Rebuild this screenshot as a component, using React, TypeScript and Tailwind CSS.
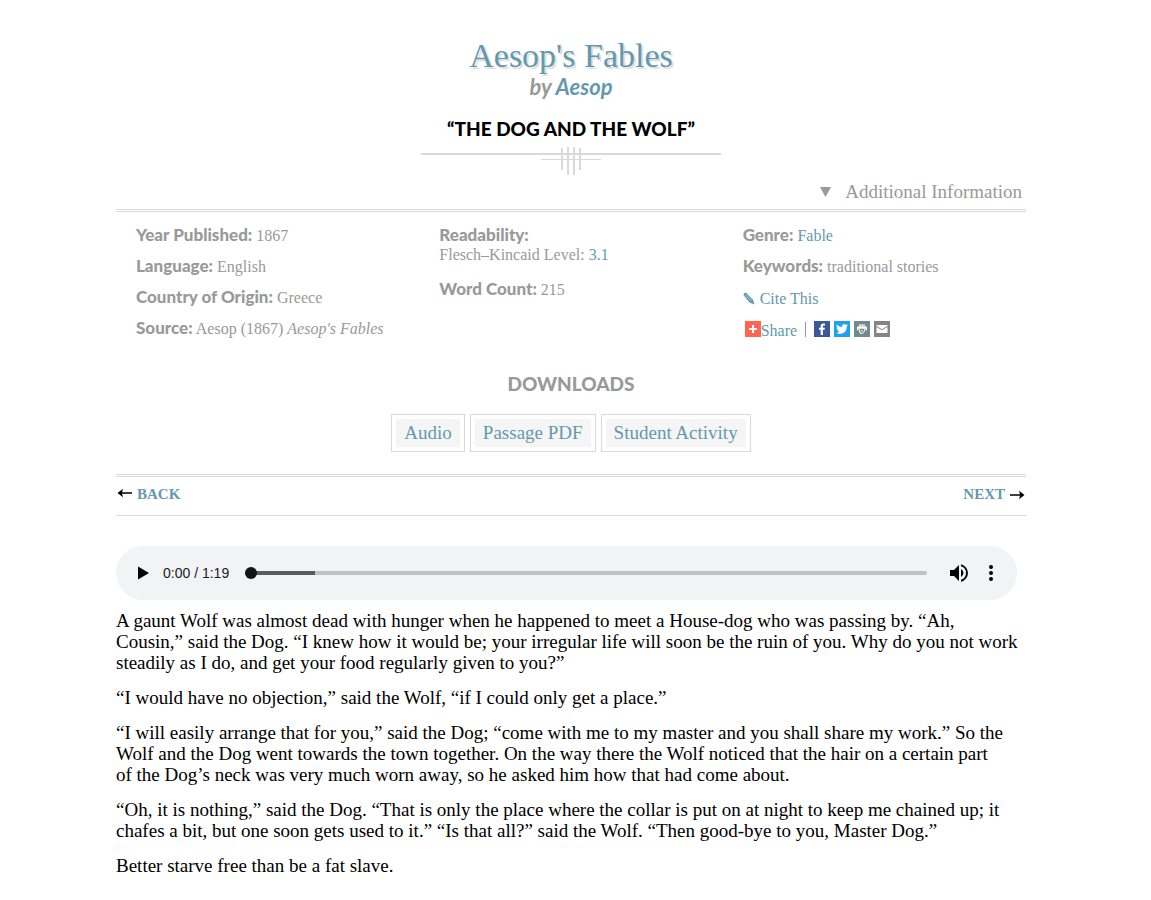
import React from "react";

const STORY: string[][] = [
  [
    "A gaunt Wolf was almost dead with hunger when he happened to meet a House-dog who was passing by. “Ah,",
    "Cousin,” said the Dog. “I knew how it would be; your irregular life will soon be the ruin of you. Why do you not work",
    "steadily as I do, and get your food regularly given to you?”",
  ],
  ["“I would have no objection,” said the Wolf, “if I could only get a place.”"],
  [
    "“I will easily arrange that for you,” said the Dog; “come with me to my master and you shall share my work.” So the",
    "Wolf and the Dog went towards the town together. On the way there the Wolf noticed that the hair on a certain part",
    "of the Dog’s neck was very much worn away, so he asked him how that had come about.",
  ],
  [
    "“Oh, it is nothing,” said the Dog. “That is only the place where the collar is put on at night to keep me chained up; it",
    "chafes a bit, but one soon gets used to it.” “Is that all?” said the Wolf. “Then good-bye to you, Master Dog.”",
  ],
  ["Better starve free than be a fat slave."],
];

function Label({ children }: { children: React.ReactNode }) {
  return <strong className="font-['Lato',sans-serif] text-[17px]/[18px] font-black">{children}</strong>;
}

function Ornament() {
  return (
    <svg className="mx-auto mt-[6px] block" width="300" height="28" viewBox="0 0 300 28" fill="#d9d9d9" aria-hidden="true" shapeRendering="crispEdges">
      <rect x="0" y="6" width="300" height="2" />
      <rect x="120" y="12" width="60" height="1" />
      <rect x="140" y="1" width="2" height="22" />
      <rect x="146" y="0" width="2" height="28" />
      <rect x="152" y="0" width="2" height="28" />
      <rect x="158" y="1" width="2" height="22" />
    </svg>
  );
}

function Arrow({ flip = false }: { flip?: boolean }) {
  return (
    <svg className={flip ? "rotate-180" : ""} width="16" height="12" viewBox="0 0 16 12" aria-hidden="true">
      <path d="M0.5 5 6 .8 5 4.200H15v1.600H5l1 3.400z" fill="#000" />
    </svg>
  );
}

function Downloads() {
  return (
    <section className="mt-[33px] text-center">
      <h3 className="font-['Lato',sans-serif] text-[19px]/6 font-black">DOWNLOADS</h3>
      <div className="mt-[18px] flex justify-center gap-[5px]">
        {["Audio", "Passage PDF", "Student Activity"].map((name) => (
          <a key={name} href="#" className="border border-[#d9d9d9] p-1 text-[#6399ae]">
            <span className="block bg-[#f5f5f5] px-2 text-[19px]/7">{name}</span>
          </a>
        ))}
      </div>
    </section>
  );
}

function ShareBar() {
  return (
    <div className="flex h-5 items-center text-[#6399ae]">
      <a href="#" className="flex items-center pl-0.5">
        <svg width="16" height="16" viewBox="0 0 16 16" aria-hidden="true">
          <rect width="16" height="16" fill="#ff6550" />
          <path d="M8 4v8M4 8h8" stroke="#fff" strokeWidth="2" />
        </svg>
        <span className="pt-1 text-base/4">Share</span>
      </a>
      <span className="mx-2 h-[15px] w-px bg-[#999]" />
      <div className="flex gap-1">
        <a href="#" aria-label="Facebook">
          <svg width="16" height="16" viewBox="0 0 16 16">
            <rect width="16" height="16" fill="#3b5998" />
            <path d="M11 2.6v2H9.9c-.8 0-1 .4-1 1v1.1h2l-.3 2.1H8.9V14H6.7V8.800H5V6.700h1.700V5.100c0-1.700 1-2.600 2.600-2.600z" fill="#fff" />
          </svg>
        </a>
        <a href="#" aria-label="Twitter">
          <svg width="16" height="16" viewBox="0 0 32 32">
            <rect width="32" height="32" fill="#1da1f2" />
            <path d="M28 8.6a9.9 9.9 0 0 1-2.8.8 4.9 4.9 0 0 0 2.1-2.7 9.9 9.9 0 0 1-3.1 1.2 4.9 4.9 0 0 0-8.4 4.5A14 14 0 0 1 5.7 7.2a4.9 4.9 0 0 0 1.5 6.6 4.9 4.9 0 0 1-2.2-.6v.1a4.9 4.9 0 0 0 4 4.8 4.9 4.9 0 0 1-2.3.1 4.9 4.9 0 0 0 4.6 3.4A9.9 9.9 0 0 1 4 23.6a14 14 0 0 0 7.5 2.2c9.1 0 14-7.5 14-14v-.6A10 10 0 0 0 28 8.6z" fill="#fff" />
          </svg>
        </a>
        <a href="#" aria-label="Print">
          <svg width="16" height="16" viewBox="0 0 16 16">
            <rect width="16" height="16" fill="#738a8d" />
            <path d="M5 3.500h6v1.200H5z" fill="#fff" />
            <path d="M4 5.300h8l1 1v3h-1.500V7.800h-7v1.500H3v-3z" fill="#fff" />
            <path d="M5.500 8.300l.5 4h2.700l1.500-1.500.3-2.500" fill="none" stroke="#fff" />
            <path d="M6.800 10h2.400" stroke="#fff" strokeWidth=".8" />
          </svg>
        </a>
        <a href="#" aria-label="Email">
          <svg width="16" height="16" viewBox="0 0 16 16">
            <rect width="16" height="16" fill="#848484" />
            <path d="M2.500 4h11v1L8 8.200 2.500 5z" fill="#fff" />
            <path d="M2.500 6.100 8 9.300l5.500-3.200V12h-11z" fill="#fff" />
          </svg>
        </a>
      </div>
    </div>
  );
}

function Player() {
  return (
    <div className="mt-[30px] mr-[9px] flex h-[54px] items-center rounded-full bg-[#f1f3f4] pr-[14px] pl-[15px] font-['Liberation_Sans',sans-serif]">
      <button type="button" aria-label="Play" className="flex size-6 items-center justify-center">
        <svg width="24" height="24" viewBox="0 0 24 24">
          <path d="M7 5.500v13L18 12z" fill="#000" />
        </svg>
      </button>
      <span className="ml-2 text-sm text-[#202124]">0:00 / 1:19</span>
      <input
        type="range"
        min={0}
        max={79}
        defaultValue={0}
        aria-label="Seek"
        className="ml-4 h-3 min-w-0 flex-1 appearance-none bg-transparent [&::-webkit-slider-runnable-track]:h-1 [&::-webkit-slider-runnable-track]:rounded-full [&::-webkit-slider-runnable-track]:bg-[linear-gradient(to_right,#5b5c5c_10.3%,#c1c2c2_10.3%)] [&::-webkit-slider-thumb]:-mt-1 [&::-webkit-slider-thumb]:size-3 [&::-webkit-slider-thumb]:appearance-none [&::-webkit-slider-thumb]:rounded-full [&::-webkit-slider-thumb]:bg-[#141414]"
      />
      <button type="button" aria-label="Mute" className="ml-5">
        <svg width="24" height="24" viewBox="0 0 24 24">
          <path d="M3 9v6h4l5 5V4L7 9H3zm13.500 3A4.500 4.500 0 0 0 14 7.970v8.050A4.500 4.500 0 0 0 16.500 12zM14 3.230v2.060a7 7 0 0 1 0 13.420v2.060a9 9 0 0 0 0-17.540z" fill="#000" />
        </svg>
      </button>
      <button type="button" aria-label="More options" className="ml-2">
        <svg width="24" height="24" viewBox="0 0 24 24">
          <circle cx="12" cy="6" r="2" />
          <circle cx="12" cy="12" r="2" />
          <circle cx="12" cy="18" r="2" />
        </svg>
      </button>
    </div>
  );
}

export default function App() {
  return (
    <div className="min-h-screen bg-white pr-[9px] pb-6 font-['Liberation_Serif',serif] text-[#999]">
      <main className="mx-auto max-w-[910px] pt-9">
        <header className="text-center">
          <h1 className="text-[34px]/10 text-[#6399ae] [text-shadow:2px_2px_0_#e0e0e0]">Aesop's Fables</h1>
          <p className="font-['Lato',sans-serif] text-[22px]/[22px] font-bold italic">
            by <a href="#" className="text-[#6399ae]">Aesop</a>
          </p>
          <h2 className="mt-[19px] font-['Lato',sans-serif] text-[19px]/6 font-black text-black">“THE DOG AND THE WOLF”</h2>
          <Ornament />
        </header>

        <div className="mt-[5px] flex justify-end pr-1">
          <button type="button" className="flex items-center gap-[14px] text-[19px]/6">
            <svg width="11" height="10" viewBox="0 0 11 10" fill="#999" aria-hidden="true">
              <path d="M0 0h11L5.500 10z" />
            </svg>
            Additional Information
          </button>
        </div>

        <section className="mt-[5px] border-y-[3px] border-double border-[#d9d9d9] pt-[14px] pb-[22px]">
          <div className="grid grid-cols-3 text-base/[19px]">
            <div className="flex flex-col gap-[11px] pl-5">
              <p className="h-5"><Label>Year Published:</Label> 1867</p>
              <p className="h-5"><Label>Language:</Label> English</p>
              <p className="h-5"><Label>Country of Origin:</Label> Greece</p>
              <p className="h-5"><Label>Source:</Label> Aesop (1867) <em>Aesop's Fables</em></p>
            </div>
            <div className="flex flex-col gap-4 pl-5">
              <p>
                <Label>Readability:</Label>
                <br />
                Flesch–Kincaid Level: <a href="#" className="text-[#6399ae]">3.1</a>
              </p>
              <p><Label>Word Count:</Label> 215</p>
            </div>
            <div className="flex flex-col gap-[11px] pl-5">
              <p className="h-5"><Label>Genre:</Label> <a href="#" className="text-[#6399ae]">Fable</a></p>
              <p className="h-5"><Label>Keywords:</Label> traditional stories</p>
              <a href="#" className="flex h-5 items-center gap-[5px] text-[#6399ae]">
                <svg width="12" height="13" viewBox="0 0 12 13" aria-hidden="true">
                  <path d="M0.500 3C.5 1.500 2 .5 3.500 1L10 7.500l1.500 5L6.500 10.500z" fill="#6399ae" />
                  <path d="M2.300 3 8 9M3.800 2 9.200 7.800" stroke="#fff" strokeWidth=".4" />
                </svg>
                Cite This
              </a>
              <ShareBar />
            </div>
          </div>
          <Downloads />
        </section>

        <nav className="flex h-[39px] justify-between border-b border-[#d9d9d9] px-px pt-[7px] text-[15px]/5 font-bold text-[#6399ae]">
          <a href="#" className="flex h-5 items-center gap-1"><Arrow />BACK</a>
          <a href="#" className="flex h-5 items-center gap-1">NEXT<Arrow flip /></a>
        </nav>

        <Player />

        <article className="mt-[10px] flex flex-col gap-[14px] text-[19px]/[21px] text-black">
          {STORY.map((lines, p) => (
            <p key={p}>
              {lines.map((line, i) => (
                <React.Fragment key={i}>
                  {i > 0 && <br />}
                  {line}
                </React.Fragment>
              ))}
            </p>
          ))}
        </article>
      </main>
    </div>
  );
}
